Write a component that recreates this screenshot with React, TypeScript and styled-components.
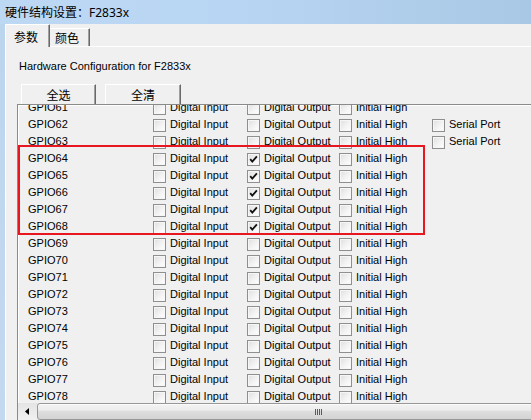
import React from "react";
import styled, { createGlobalStyle } from "styled-components";

const GlobalStyle = createGlobalStyle`
  html, body {
    margin: 0;
    padding: 0;
    background: #f0f0f0;
    overflow: hidden;
  }
  body {
    font-family: "Liberation Sans", Arial, sans-serif;
  }
`;

const Window = styled.div`
  width: 531px;
  height: 420px;
  overflow: hidden;
  display: flex;
  flex-direction: column;
  background: #f0f0f0;
`;

const TitleBar = styled.div`
  height: 24px;
  flex: none;
  box-sizing: border-box;
  display: flex;
  align-items: center;
  padding-left: 5px;
  background: linear-gradient(
    90deg,
    #bdd8f3 0%,
    #b9d6f3 35%,
    #b6d3f1 55%,
    #aecde9 80%,
    #a9c8e6 100%
  );
  font-family: "Noto Sans", "Noto Sans CJK SC", sans-serif;
  font-size: 12px;
  color: #000;
  white-space: nowrap;
`;

const Body = styled.div`
  flex: 1;
  min-height: 0;
  display: flex;
`;

const Frame = styled.div`
  width: 5px;
  flex: none;
  background: linear-gradient(180deg, #bcd5ee, #c3d9f0);
`;

const Client = styled.div`
  flex: 1;
  min-width: 0;
  display: flex;
  flex-direction: column;
`;

const TabStrip = styled.div`
  height: 22px;
  flex: none;
  display: flex;
  align-items: flex-start;
  position: relative;
  z-index: 1;
`;

const Tab = styled.div<{ $active?: boolean; $width: number }>`
  box-sizing: border-box;
  width: ${(p) => p.$width}px;
  height: ${(p) => (p.$active ? 23 : 18)}px;
  margin-top: ${(p) => (p.$active ? 0 : 4)}px;
  padding-left: ${(p) => (p.$active ? 8 : 5)}px;
  display: flex;
  align-items: center;
  background: #f0f0f0;
  border-top: 1px solid #ffffff;
  border-left: ${(p) => (p.$active ? "1px solid #ffffff" : "none")};
  border-right: 1px solid #696969;
  box-shadow: inset -1px 0 0 #a0a0a0;
  border-top-right-radius: 1px;
  border-top-left-radius: 1px;
  font-family: "Noto Sans CJK SC", sans-serif;
  font-size: 12px;
  color: #000;
`;

const Panel = styled.div`
  flex: 1;
  min-height: 0;
  display: flex;
  flex-direction: column;
  align-items: flex-start;
  border-top: 1px solid #ffffff;
  border-left: 1px solid #ffffff;
  padding-left: 11px;
`;

const Caption = styled.div`
  margin: 12px 0 0 2px;
  height: 14px;
  line-height: 14px;
  font-size: 11px;
  color: #000;
  white-space: nowrap;
`;

const ButtonRow = styled.div`
  display: flex;
  gap: 9px;
  margin: 11px 0 0 4px;
`;

const PushButton = styled.div<{ $width: number }>`
  box-sizing: border-box;
  width: ${(p) => p.$width}px;
  height: 23px;
  display: flex;
  align-items: center;
  justify-content: center;
  background: #f0f0f0;
  border-top: 1px solid #ffffff;
  border-left: 1px solid #ffffff;
  border-right: 1px solid #696969;
  border-bottom: 1px solid #696969;
  box-shadow: inset -1px -1px 0 #a0a0a0;
  font-family: "Noto Sans CJK SC", sans-serif;
  font-size: 12px;
  padding-bottom: 2px;
  color: #000;
`;

const ListBox = styled.div`
  position: relative;
  margin-top: -3px;
  width: 700px;
  flex: none;
  box-sizing: border-box;
  border: 1px solid #8a8a8a;
  box-shadow: inset 1px 1px 0 #ffffff;
  display: flex;
  flex-direction: column;
  background: #f0f0f0;
`;

const RowsViewport = styled.div`
  height: 298px;
  overflow: hidden;
`;

const Rows = styled.div`
  margin-top: -6px;
`;

const Row = styled.div`
  height: 17px;
  display: flex;
  align-items: center;
  padding-left: 10px;
  font-size: 11px;
  line-height: 17px;
  color: #000;
  white-space: nowrap;
`;

const NameCell = styled.div`
  width: 125px;
  flex: none;
`;

const Option = styled.div<{ $width?: number }>`
  display: flex;
  align-items: center;
  gap: 4px;
  flex: none;
  width: ${(p) => (p.$width ? `${p.$width}px` : "auto")};
`;

const Box = styled.div`
  width: 13px;
  height: 13px;
  margin-top: 2px;
  box-sizing: border-box;
  flex: none;
  border: 1px solid #8e8f8f;
  background: linear-gradient(135deg, #dedede 0%, #f3f3f3 55%, #ffffff 100%);
  box-shadow: inset 0 0 0 1px #f6f6f6;
  display: flex;
  align-items: center;
  justify-content: center;
`;

const Highlight = styled.div`
  position: absolute;
  left: 0;
  top: 40px;
  width: 407px;
  height: 90px;
  box-sizing: border-box;
  border: 2px solid #e8161f;
  pointer-events: none;
  z-index: 2;
`;

const ScrollBar = styled.div`
  height: 17px;
  flex: none;
  display: flex;
  background: linear-gradient(180deg, #e4e4e4, #f1f1f1);
`;

const ArrowButton = styled.div`
  width: 19px;
  flex: none;
  display: flex;
  align-items: center;
  justify-content: center;
  padding-right: 2px;
  box-sizing: border-box;
`;

const Thumb = styled.div`
  width: 564px;
  flex: none;
  box-sizing: border-box;
  border: 1px solid #989898;
  border-radius: 3px;
  background: linear-gradient(
    180deg,
    #f4f4f4 0%,
    #ececec 40%,
    #dedede 50%,
    #d3d3d3 100%
  );
  box-shadow: inset 0 1px 0 #fafafa;
  display: flex;
  align-items: center;
  justify-content: center;
`;

const Check: React.FC<{ checked?: boolean }> = ({ checked }) => (
  <Box>
    {checked && (
      <svg width="11" height="11" viewBox="0 0 11 11">
        <path
          d="M2.2 5.2 L4.3 7.6 L8.9 2.4"
          fill="none"
          stroke="#111"
          strokeWidth="1.8"
        />
      </svg>
    )}
  </Box>
);

type Gpio = { n: number; output: boolean; serial: boolean };

const gpios: Gpio[] = Array.from({ length: 19 }, (_, i) => {
  const n = 61 + i;
  return { n, output: n >= 64 && n <= 68, serial: n === 62 || n === 63 };
});

export default function App() {
  return (
    <>
      <GlobalStyle />
      <Window>
        <TitleBar>硬件结构设置：F2833x</TitleBar>
        <Body>
          <Frame />
          <Client>
            <TabStrip>
              <Tab $active $width={45}>参数</Tab>
              <Tab $width={40}>颜色</Tab>
            </TabStrip>
            <Panel>
              <Caption>Hardware Configuration for F2833x</Caption>
              <ButtonRow>
                <PushButton $width={75}>全选</PushButton>
                <PushButton $width={76}>全清</PushButton>
              </ButtonRow>
              <ListBox>
                <RowsViewport>
                  <Rows>
                    {gpios.map((g) => (
                      <Row key={g.n}>
                        <NameCell>GPIO{g.n}</NameCell>
                        <Option $width={94}>
                          <Check />
                          <span>Digital Input</span>
                        </Option>
                        <Option $width={92}>
                          <Check checked={g.output} />
                          <span>Digital Output</span>
                        </Option>
                        <Option $width={93}>
                          <Check />
                          <span>Initial High</span>
                        </Option>
                        {g.serial && (
                          <Option>
                            <Check />
                            <span>Serial Port</span>
                          </Option>
                        )}
                      </Row>
                    ))}
                  </Rows>
                </RowsViewport>
                <ScrollBar>
                  <ArrowButton>
                    <svg width="4" height="7" viewBox="0 0 4 7">
                      <path d="M4 0 L0 3.5 L4 7 Z" fill="#000" />
                    </svg>
                  </ArrowButton>
                  <Thumb>
                    <svg width="8" height="6" viewBox="0 0 8 6">
                      <rect x="0" y="0" width="1" height="6" fill="#5a5a5a" />
                      <rect x="2" y="0" width="1" height="6" fill="#5a5a5a" />
                      <rect x="4" y="0" width="1" height="6" fill="#5a5a5a" />
                      <rect x="6" y="0" width="1" height="6" fill="#5a5a5a" />
                    </svg>
                  </Thumb>
                </ScrollBar>
                <Highlight />
              </ListBox>
            </Panel>
          </Client>
        </Body>
      </Window>
    </>
  );
}
